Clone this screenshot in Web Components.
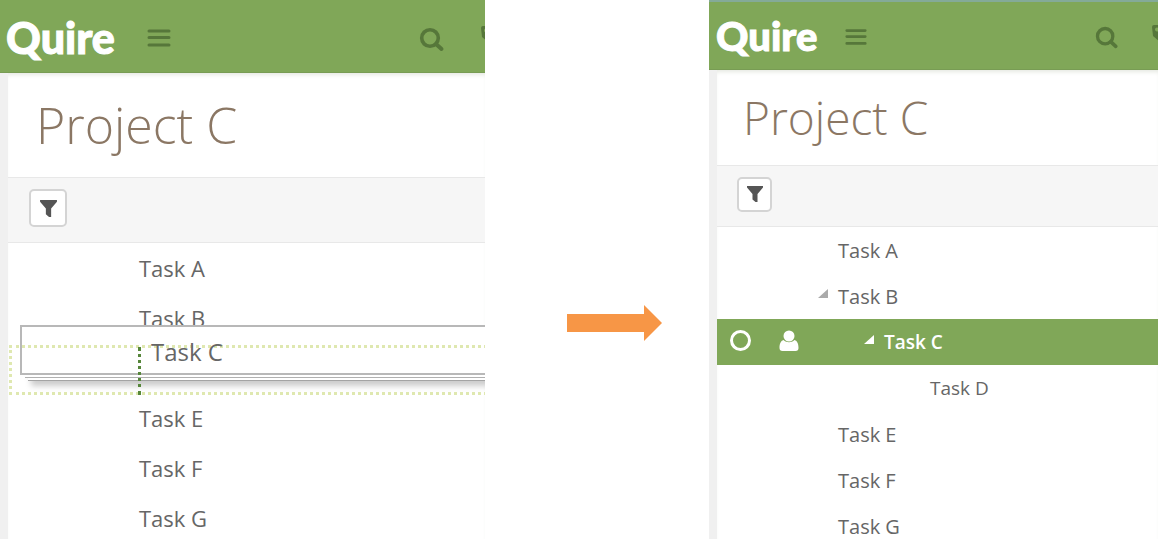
<!DOCTYPE html>
<html lang="en">
<head>
<meta charset="utf-8">
<meta name="viewport" content="width=device-width, initial-scale=1">
<title>Quire – Project C</title>
<style>
  body { margin: 0; background: #fff; font-family: "Open Sans", sans-serif; color: #666; }
</style>
</head>
<body>
<drag-demo>
  <quire-board slot="before" size="large">
    <task-list>
      <task-row>Task A</task-row>
      <task-row>Task B</task-row>
      <drop-target>Task C</drop-target>
      <task-row>Task E</task-row>
      <task-row>Task F</task-row>
      <task-row>Task G</task-row>
    </task-list>
  </quire-board>
  <quire-board slot="after" size="medium">
    <task-list>
      <task-row>Task A</task-row>
      <task-row parent>Task B</task-row>
      <task-row parent selected level="1">Task C</task-row>
      <task-row level="2">Task D</task-row>
      <task-row>Task E</task-row>
      <task-row>Task F</task-row>
      <task-row>Task G</task-row>
    </task-list>
  </quire-board>
</drag-demo>

<script>
const define = (name, html, setup) => {
  const template = document.createElement('template');
  template.innerHTML = html;
  customElements.define(name, class extends HTMLElement {
    constructor() {
      super();
      this.attachShadow({ mode: 'open' }).append(template.content.cloneNode(true));
    }
    connectedCallback() { if (setup) setup(this); }
  });
};

define('drag-demo', `
  <style>
    :host { display: grid; grid-template-columns: 485fr 224fr 449fr; height: 100vh; overflow: hidden; }
    .middle { display: flex; align-items: center; justify-content: center; padding: 106px 0 0 35px; box-sizing: border-box; }
    svg { width: 95px; height: 36px; }
    ::slotted(*) { min-width: 0; }
  </style>
  <slot name="before"></slot>
  <div class="middle">
    <svg viewBox="0 0 95 36" role="img" aria-label="becomes"><path fill="#f79646" d="M0 9h77V0l18 18-18 18v-9H0z"/></svg>
  </div>
  <slot name="after"></slot>`);

define('quire-board', `
  <style>
    :host { display: flex; flex-direction: column; overflow: hidden; background: #fff; }
    :host([size="large"]) {
      --bar: 73px; --bar-edge: #80a758; --logo: 43px; --logo-lead: 6px; --menu: 26px; --menu-gap: 31px; --search: 26px; --tag-gap: 36px; --tag-cut: -20px;
      --title: 50px; --title-box: 104px; --title-lead: 28px; --tools: 66px; --tools-lead: 21px; --button: 38px; --funnel: 19px;
      --row: 50px; --text: 22px; --lead: 111px; --indent: 50px;
    }
    :host([size="medium"]) {
      --bar: 70px; --bar-edge: #84aa98; --logo: 40px; --logo-lead: 7px; --menu: 24px; --menu-gap: 27px; --search: 24px; --tag-gap: 33px; --tag-cut: -18px;
      --title: 46px; --title-box: 95px; --title-lead: 26px; --tools: 62px; --tools-lead: 20px; --button: 35px; --funnel: 18px;
      --row: 46px; --text: 20px; --lead: 101px; --indent: 46px;
    }
    .body { flex: 1; border-left: 8px solid #f0f0f0; box-shadow: inset 0 4px 4px -2px #e6e9e2; }
  </style>
  <quire-bar></quire-bar>
  <div class="body">
    <project-title>Project C</project-title>
    <filter-bar></filter-bar>
    <slot></slot>
  </div>`);

define('quire-bar', `
  <style>
    :host { display: block; background: #80a758; }
    header { display: flex; align-items: center; height: var(--bar); box-sizing: border-box; border-top: 2px solid var(--bar-edge); border-bottom: 1px solid #789c54; }
    a { margin-left: var(--logo-lead); color: #fff; font: 900 var(--logo)/1 Lato, sans-serif; -webkit-text-stroke: 1px #fff; text-decoration: none; }
    button { display: block; padding: 0; border: 0; background: none; color: #56773a; flex: none; }
    svg { display: block; width: 100%; }
    .menu { width: var(--menu); margin-left: var(--menu-gap); margin-top: 2px; }
    .search { width: var(--search); margin-left: auto; margin-top: 5px; }
    .tag { width: 24px; margin-left: var(--tag-gap); margin-right: var(--tag-cut); }
  </style>
  <header>
    <a href="#">Quire</a>
    <button class="menu" aria-label="Menu"><svg viewBox="0 0 26 26"><path d="M3 6h20M3 12.500h20M3 20h20" stroke="currentColor" stroke-width="3" stroke-linecap="round"/></svg></button>
    <button class="search" aria-label="Search"><svg viewBox="0 0 26 26"><circle cx="11" cy="11" r="8.3" fill="none" stroke="currentColor" stroke-width="3.6"/><path d="M17 17l5.500 5" stroke="currentColor" stroke-width="4" stroke-linecap="round"/></svg></button>
    <button class="tag" aria-label="Tags"><svg viewBox="0 0 24 24"><path fill="currentColor" fill-rule="evenodd" d="M0 3q0-2 2-2h9l12 12-9 10L1 12zM5 3.500a2 2 0 1 0 .1 0z"/></svg></button>
  </header>`);

define('project-title', `
  <style>
    :host { display: block; }
    h1 { margin: 0; height: var(--title-box); padding-left: var(--title-lead); font-size: var(--title); line-height: var(--title-box); font-weight: 300; color: #8b7764; white-space: nowrap; }
  </style>
  <h1><slot></slot></h1>`);

define('filter-bar', `
  <style>
    :host { display: flex; align-items: center; height: var(--tools); padding-left: var(--tools-lead); box-sizing: border-box; background: #f6f6f6; border-top: 1px solid #e8e8e8; border-bottom: 1px solid #e8e8e8; }
    button { display: grid; place-items: center; width: var(--button); height: var(--button); padding: 0; background: #fff; border: 2px solid #d4d4d4; border-radius: 5px; color: #555; margin-bottom: 4px; }
    svg { width: var(--funnel); height: var(--funnel); }
  </style>
  <button aria-label="Filter"><svg viewBox="0 0 18 18"><path fill="currentColor" d="M1 1h16v1.500L11.500 9v8h-2L6.500 14.500V9L1 2.500z"/></svg></button>`);

define('task-list', `
  <style>:host { display: block; } div { display: flex; flex-direction: column; }</style>
  <div role="list"><slot></slot></div>`);

define('task-row', `
  <style>
    :host { display: flex; align-items: center; height: var(--row); font-size: var(--text); --level: 0; }
    :host([level="1"]) { --level: 1; --text: 19px; }
    :host([level="2"]) { --level: 2; --text: 19px; }
    :host([selected]) { background: #80a758; color: #fff; font-weight: 600; }
    .tools { display: flex; align-items: center; gap: 28px; flex: none; box-sizing: border-box; width: calc(var(--lead) + var(--indent) * var(--level)); padding: 0 0 3px 13px; }
    .tools > *, .toggle svg { visibility: hidden; }
    :host([selected]) .tools > *, :host([parent]) .toggle svg { visibility: visible; }
    input { appearance: none; width: 21px; height: 21px; margin: 0; border: 3px solid #fff; border-radius: 50%; box-sizing: border-box; }
    button { width: 20px; padding: 0; border: 0; background: none; color: inherit; }
    svg { display: block; }
    .toggle { flex: none; padding-bottom: 6px; color: #aaa; }
    :host([selected]) .toggle { color: #fff; }
    .name { white-space: nowrap; }
  </style>
  <div class="tools">
    <input type="checkbox" aria-label="Complete">
    <button aria-label="Assign"><svg width="20" height="22" viewBox="0 0 20 22"><circle cx="10" cy="6" r="5.500" fill="currentColor"/><path fill="currentColor" d="M4.500 10c3 3 8 3 11 0 3 1 4 4 4 8 0 2-1 3-3 3h-13c-2 0-3-1-3-3 0-4 1-7 4-8z"/></svg></button>
  </div>
  <button class="toggle" tabindex="-1" aria-label="Expand"><svg width="10" height="9" viewBox="0 0 10 9"><path fill="currentColor" d="M10 0v9H0z"/></svg></button>
  <span class="name"><slot></slot></span>`,
  host => host.setAttribute('role', 'listitem'));

/* Landing spot of the dragged task, with the lifted card floating over it. */
define('drop-target', `
  <style>
    :host { display: block; position: relative; height: var(--row); }
    .card, .name { position: absolute; left: 12px; right: -20px; top: -18px; height: 50px; box-sizing: border-box; }
    .card { border: 2px solid #b8b8b8; background: #fff; box-shadow: 5px 2px #fff, 5px 3px #b0b0b0, 8px 5px #fff, 8px 6px #a4a4a4, 11px 11px 6px #ccc; }
    .name { padding-left: 131px; font-size: 24px; line-height: 54px; }
    .spot { position: absolute; left: 1px; right: -20px; top: 2px; height: 50px; box-sizing: border-box; border: 3px dotted #dfe8b0; }
    .level { position: absolute; left: 130px; top: 4px; height: 48px; border-left: 3px dotted #56863a; }
  </style>
  <div class="card"></div>
  <div class="spot"></div>
  <div class="level"></div>
  <div class="name"><slot></slot></div>`,
  host => host.setAttribute('role', 'listitem'));
</script>
</body>
</html>
